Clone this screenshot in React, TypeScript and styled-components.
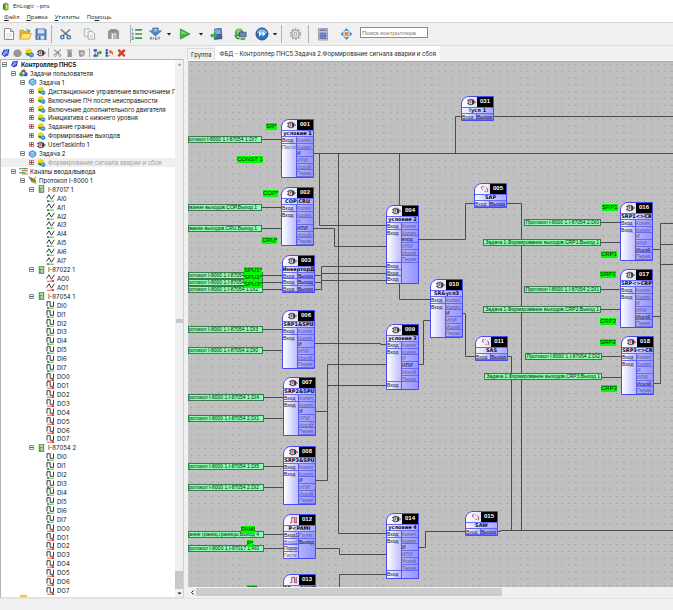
import React from "react";
import styled, { createGlobalStyle } from "styled-components";

const GlobalStyle = createGlobalStyle`
  * { box-sizing: border-box; }
  html, body { margin: 0; height: 100%; }
  #root { height: 100%; }
  body { overflow: hidden; background: #f0f0f0; }
  button { margin: 0; padding: 0; border: 0; background: none; color: inherit; font: inherit; }
`;

const arial = `"Liberation Sans", Arial, sans-serif`;
const inter = `Inter, "Liberation Sans", sans-serif`;
const segoe = `"Open Sans", "Noto Sans", sans-serif`;
const tahoma = `"DejaVu Sans", Verdana, sans-serif`;

const Window = styled.div`
  display: flex; flex-direction: column; height: 100vh; min-height: 300px;
  background: #f0f0f0; color: #1c1c1c; font: 6px/9px ${inter};
`;
const TitleBar = styled.header`
  display: flex; align-items: center; gap: 4px; height: 12px; padding-left: 2px;
  background: #fff;
`;
const AppTitle = styled.h1`margin: 0; font: 6px/10px ${segoe};`;
const MenuBar = styled.nav`
  display: flex; align-items: center; gap: 7px; height: 10px; padding-left: 4px;
  background: #fff; font: 6px/10px ${segoe};
  u { text-decoration-thickness: 1px; text-underline-offset: 1px; }
`;
const MainToolbar = styled.div`
  display: flex; align-items: center; height: 24px; padding-left: 3px;
  background: #f0f0f0; border-top: 1px solid #d5d5d5; border-bottom: 1px solid #dcdcdc;
`;
const Tool = styled.button<{ $gap?: number; $size?: number }>`
  display: grid; place-items: center; flex: none;
  width: ${p => p.$size ?? 12}px; height: 14px; margin-left: ${p => p.$gap ?? 0}px;
  svg { display: block; width: 100%; height: 100%; }
`;
const Divider = styled.span<{ $gap: number; $h?: number }>`
  flex: none; width: 1px; height: ${p => p.$h ?? 18}px; margin-left: ${p => p.$gap}px; background: #b0b0b0;
`;
const Search = styled.input`
  width: 68px; height: 11px; margin: 0 0 3px 7px; padding: 0 1px; border: 1px solid #8a8a8a;
  background: #fff; font: 6px/9px ${arial}; outline: none; border-radius: 0;
  &::placeholder { color: #777; opacity: 1; }
`;
const Workspace = styled.main`display: flex; flex: 1; min-height: 0;`;
const Sidebar = styled.aside`display: flex; flex-direction: column; flex: none; width: 184px;`;
const TreeToolbar = styled.div`display: flex; align-items: center; height: 13px; padding-left: 1px;`;
const TreePane = styled.div`
  display: flex; flex: 1; min-height: 0; overflow: hidden;
  background: #fff; border: 1px solid #b4b4b4; border-bottom-color: #e0e0e0; border-right-color: #d0d0d0;
`;
const Tree = styled.ul`
  display: grid; grid-template-rows: repeat(60, minmax(8px, 1fr)) 2px; flex: 1; min-width: 0;
  margin: 0; padding: 0; list-style: none; overflow: hidden;
`;
const TreeRow = styled.li<{ $level: number; $root?: boolean; $muted?: boolean }>`
  display: flex; align-items: center; min-height: 0; overflow: hidden; white-space: nowrap;
  padding-left: ${p => 1 + p.$level * 9}px;
  background: ${p => (p.$muted ? "#efefef" : "none")};
  color: ${p => (p.$muted ? "#a0a0a0" : "#111")};
  font-weight: ${p => (p.$root ? "bold" : "normal")};
`;
const Expander = styled.button<{ $leaf?: boolean }>`
  flex: none; width: 5px; height: 5px; margin-right: 3px; visibility: ${p => (p.$leaf ? "hidden" : "visible")};
  svg { display: block; width: 5px; height: 5px; }
`;
const RowIcon = styled.span`
  flex: none; width: 9px; height: 8px; margin-right: 2px;
  svg { display: block; width: 9px; height: 8px; }
`;
const VScroll = styled.div`
  display: flex; flex-direction: column; flex: none; width: 8px; background: #f0f0f0;
`;
const ScrollButton = styled.button`
  flex: none; display: grid; place-items: center; width: 8px; height: 8px; background: #f2f2f2;
  svg { display: block; width: 5px; height: 5px; }
`;
const Spacer = styled.div<{ $grow: number }>`flex: ${p => p.$grow} 1 0;`;
const Grip = styled.div`flex: none; height: 4px; margin-left: 1px; background: #c6c6c6;`;
const VThumb = styled.div`flex: none; height: 18px; background: #c8c8c8;`;

const Editor = styled.section`display: flex; flex-direction: column; flex: 1; min-width: 0; padding-left: 3px;`;
const Tabs = styled.div`display: flex; align-items: flex-end; height: 15px; border-bottom: 1px solid #fafafa;`;
const Tab = styled.button<{ $active?: boolean }>`
  height: ${p => (p.$active ? 14 : 12)}px; padding: 0 3px; white-space: nowrap;
  background: ${p => (p.$active ? "#fff" : "#f2f2f2")}; border: 1px solid ${p => (p.$active ? "#fff" : "#dcdcdc")};
  border-bottom: 0; line-height: 11px;
`;
const Canvas = styled.div`
  position: relative; flex: 1; min-height: 0; overflow: hidden; margin-left: 1px;
  background: #c0c0c0; border-top: 1px solid #a8a8a8;
`;
const Wires = styled.svg`position: absolute; inset: 0; width: 100%; height: 100%;`;
const HScroll = styled.div`
  display: flex; flex: none; height: 9px; margin: 1px 0 1px 1px; background: #f0f0f0;
`;
const HThumb = styled.div`width: 63%; height: 8px; background: #cdcdcd;`;
const Status = styled.footer`height: 12px; background: #f0f0f0; border-top: 1px solid #e4e4e4;`;

const NodeBox = styled.article<{ $x: number; $y: number; $h: number }>`
  position: absolute; left: ${p => p.$x}px; top: ${p => p.$y}px; width: 33px; height: ${p => p.$h}px;
  display: grid; grid-template-rows: 10px 7px 1fr; overflow: hidden;
  border: 1px solid #4a4af0; border-radius: 8px 0 0 0; background: #a6a6ff; color: #08081c;
`;
const NodeHead = styled.div`
  display: flex; justify-content: flex-end; align-items: center; gap: 1px;
  background: linear-gradient(90deg, #fff, #c4c4ff);
  svg { width: 9px; height: 8px; }
`;
const NodeNumber = styled.b`
  width: 16px; height: 10px; background: #000; color: #fff; text-align: center; font: bold 6px/9px ${arial};
`;
const NodeTitle = styled.h2`
  margin: 0; overflow: hidden; white-space: nowrap; border-top: 1px solid #6a6af4; border-bottom: 1px solid #6a6af4;
  display: flex; justify-content: center; background: linear-gradient(90deg, #f4f4ff, #a8a8ff);
  font: bold 5px/5px ${tahoma};
`;
const Pins = styled.div`display: grid; grid-template-columns: 14fr 17fr; min-height: 0;`;
const PinColumn = styled.div<{ $out?: boolean; $n: number }>`
  display: grid; grid-template-rows: repeat(${p => p.$n}, minmax(0, 1fr)); min-height: 0; min-width: 0;
  border-left: ${p => (p.$out ? "1px solid #5a5af2" : "0")};
  background: ${p => (p.$out ? "linear-gradient(90deg, #b4b4ff, #9494ff)" : "linear-gradient(90deg, #fff, #bcbcff)")};
`;
const Pin = styled.span<{ $dim?: boolean; $line?: boolean }>`
  overflow: hidden; white-space: nowrap; min-height: 0;
  color: ${p => (p.$dim ? "#54548c" : "#08081c")};
  border-bottom: ${p => (p.$line ? "1px solid #6868f6" : "0")};
  font: 5px/6px ${arial};
`;
const Mark = styled.span<{ $x: number; $y: number }>`
  position: absolute; left: ${p => p.$x}px; top: ${p => p.$y}px; height: 7px;
  background: #00fc00; color: #001c00; white-space: nowrap; font: 6px/7px ${arial};
`;
const Source = styled.span<{ $x: number; $y: number; $w: number }>`
  position: absolute; left: ${p => p.$x}px; top: ${p => p.$y}px; width: ${p => p.$w}px; height: 7px;
  display: flex; justify-content: flex-end; overflow: hidden; white-space: nowrap; padding-right: ${p => (p.$x ? 1 : 4)}px;
  background: #8dfcae; border: 1px solid #3b7a50; color: #0a2412; font: 5px/5px ${arial};
`;

/* ---------- icons ---------- */
const Doc = () => (
  <svg viewBox="0 0 12 14"><path d="M1.5 1.5h6l3 3v8h-9z" fill="#fff" stroke="#8d8d8d" /><path d="M7.5 1.5v3h3" fill="#ddd" stroke="#8d8d8d" /><path d="M3 7h6M3 9h6M3 11h4" stroke="#cfd6dc" /></svg>
);
const OpenFolder = () => (
  <svg viewBox="0 0 14 14"><path d="M1 12V3h4l1 1.500h5V12z" fill="#e3b530" stroke="#b98a1a" strokeWidth=".7" /><path d="M1 12.500 3.500 6.500H13.500L11 12.500z" fill="#ffe27a" stroke="#c4982a" strokeWidth=".7" /><path d="M7 3.500c1-2 3-2 4-.5l1-.5-.3 2.600-2.300-.8.800-.5c-.7-1-2-1-3.200-.3z" fill="#57a83a" /></svg>
);
const Floppy = () => (
  <svg viewBox="0 0 13 14"><path d="M1 1.500h10l1 1V13H1z" fill="#5f88c4" stroke="#3c629c" strokeWidth=".8" /><path d="M3 2h7v4.500H3z" fill="#cfe0f5" /><path d="M3 9h7v4H3z" fill="#dfe4ea" /><path d="M4 9.500h2V13H4z" fill="#3f5f90" /></svg>
);
const Scissors = ({ gray }: { gray?: boolean }) => (
  <svg viewBox="0 0 14 14"><path d="m2 2 8 7M12 2 4 9" stroke={gray ? "#8f8f8f" : "#7c8794"} strokeWidth="1.700" /><path d="m7 6 2 2" stroke="#444" /><circle cx="3.500" cy="10.500" r="1.800" fill="none" stroke={gray ? "#999" : "#3878b8"} strokeWidth="1.500" /><circle cx="10.500" cy="10.500" r="1.800" fill="none" stroke={gray ? "#999" : "#3878b8"} strokeWidth="1.500" /></svg>
);
const Copy = () => (
  <svg viewBox="0 0 14 14"><path d="M1.500 1.500h5l2 2v6h-7z" fill="#f4f4f4" stroke="#a9adb2" /><path d="M5.500 4.500h5l2 2v6h-7z" fill="#fafafa" stroke="#a0a5aa" /><path d="M7 8h4M7 10h4" stroke="#ccc" /></svg>
);
const Paste = () => (
  <svg viewBox="0 0 14 14"><path d="M1 12.500V4l3-2.500h6L13 4v8.500h-3V6.500H5v6z" fill="#989898" /><path d="M6.500 7.500h3v5h-3z" fill="#b4b4b4" /><path d="M4 4h6" stroke="#7c7c7c" /></svg>
);
const NumberList = () => (
  <svg viewBox="0 0 13 14"><path d="M4.500 2.500H12M4.500 7H12M4.500 11.500H12" stroke="#3a9a3a" strokeWidth="1.700" /><path d="M1.500 1v3M.5 6h2L1 8h1.500M.5 10h2v3h-2M1 11.500h1" fill="none" stroke="#4b6a8a" strokeWidth=".8" /></svg>
);
const Load = () => (
  <svg viewBox="0 0 14 14"><path d="M4 .5h6v3h3.500L7 9.500.5 3.500H4z" fill="#5288c8" stroke="#3567a0" strokeWidth=".6" /><path d="M5 1.500h4v3H5z" fill="#8fb5e2" /><path d="M1.500 13v-2.500h1.500V13M5 10.500V13M7 10.500V13h1.500v-2.500M10 10.500h2M11 10.500V13" fill="none" stroke="#4a78c8" strokeWidth=".9" /></svg>
);
const Play = () => (
  <svg viewBox="0 0 13 14"><path d="M1.500 1.500 12 7 1.500 12.500z" fill="#3fb53f" stroke="#2a8f2a" strokeWidth=".8" /><path d="M2.500 3.500 9 7H2.500z" fill="#7fd67a" /></svg>
);
const Caret = () => <svg viewBox="0 0 6 6"><path d="M.8 2h4.400L3 4.500z" fill="#222" /></svg>;
const Disk = () => (
  <svg viewBox="0 0 14 14"><path d="M5 1.500 12 1l1 11-8 1z" fill="#4d5aa5" stroke="#333c78" strokeWidth=".6" /><path d="M5 2h6.500v5H5z" fill="#6cb8e0" /><path d="M1 7.500h3.500V5l4 3.800-4 3.800V10H1z" fill="#3fae4f" stroke="#27803a" strokeWidth=".5" /></svg>
);
const GlobePc = () => (
  <svg viewBox="0 0 14 14"><circle cx="5.500" cy="5.500" r="4.500" fill="#3f9a45" /><path d="M2 4c2-3 5-3 6-1L6 5 4 8z" fill="#8bd06a" /><path d="M6 5h7v5H6z" fill="#5d8cc0" stroke="#444b60" strokeWidth=".8" /><path d="M7 11h5v2.500H7z" fill="#6f9a70" /><path d="M1 8c1 3 2 4 5 4" stroke="#2f7a36" fill="none" strokeWidth="1.500" /></svg>
);
const Forward = () => (
  <svg viewBox="0 0 14 14"><circle cx="7" cy="7" r="6" fill="#1f78cc" stroke="#3c4858" strokeWidth="1" /><path d="M2 6c1-5 9-5 10 0-3 1.500-7 1.500-10 0" fill="#7cc0f2" /><path d="m4 4.500 3 2.500-3 2.500zM7.500 4.500l3 2.500-3 2.500z" fill="#fff" /></svg>
);
const Gear = () => (
  <svg viewBox="0 0 14 14"><circle cx="7" cy="7" r="5.300" fill="none" stroke="#a0a0a0" strokeWidth="1.800" strokeDasharray="2 1.330" /><circle cx="7" cy="7" r="4" fill="#ededed" stroke="#979797" strokeWidth="1" /><circle cx="7" cy="7" r="1.600" fill="#f8f8f8" stroke="#979797" /></svg>
);
const Calc = () => (
  <svg viewBox="0 0 10 13"><path d="M.5 1h9v11.500h-9z" fill="#d2d6e6" stroke="#8a8f9a" strokeWidth=".8" /><path d="M1.500 2h7v1.700h-7z" fill="#6b7296" /><path d="M1.500 5h7v6.500h-7z" fill="#6a72bd" /><path d="M2 7h6M2 9.500h6" stroke="#9aa0da" strokeWidth=".6" /></svg>
);
const Move = () => (
  <svg viewBox="0 0 14 14"><path d="m7 .5 2.700 3.200H4.300zM7 13.500l2.700-3.200H4.300zM.5 7l3.200-2.700v5.400zM13.500 7l-3.200-2.700v5.400z" fill="#4395c4" /><path d="M3.500 3.500h2v2h-2zM8.500 3.500h2v2h-2zM3.500 8.500h2v2h-2zM8.500 8.500h2v2h-2z" fill="#a9c8da" /><path d="M5 5h4v4H5z" fill="#f08030" /></svg>
);
const Cube = () => (
  <svg viewBox="0 0 10 10"><path d="M3 1.500 9.500.8 8 7.500 4 9.500.5 6.500z" fill="#2b3fd0" /><path d="M3.500 2.500 8 2 7 6 3 7z" fill="#7f96f4" /><path d="m1.500 6 2-.5.800 2.500z" fill="#dfe6ff" /></svg>
);
const Hex = () => <svg viewBox="0 0 10 10"><path d="M3 1h4l2.500 3v3L7 9.500H3L.5 7V4z" fill="#969696" /></svg>;
const Ball = () => (
  <svg viewBox="0 0 10 10"><circle cx="4.200" cy="4" r="3.800" fill="#f2d21a" /><path d="M.6 5.500C3 4 5 5 6 8 3.500 8.800 1.200 7.500.6 5.500" fill="#2f9c3c" /><circle cx="7.200" cy="7.200" r="2.700" fill="#2f8be0" /><path d="M5.500 6.800h3" stroke="#bfe2ff" strokeWidth=".8" /></svg>
);
const Plug = () => (
  <svg viewBox="0 0 10 9"><path d="M2 1.500h4v6H2z" fill="#e9e9ee" stroke="#3c3c44" strokeWidth="1" /><path d="M0 3h2M0 6h2M7 4.500h3" stroke="#333" strokeWidth="1" /><path d="M4 3v3M3 3h2" stroke="#c03038" strokeWidth=".9" /><path d="M6 2h2v5H6" fill="#333" /></svg>
);
const GraySlab = () => <svg viewBox="0 0 10 10"><path d="M2 1h6v1.500H2zM3 3h4.500v6.500H3z" fill="#909090" /></svg>;
const GrayTrash = () => <svg viewBox="0 0 10 10"><path d="M1.500 2h7v5l-3 2.500-3-1z" fill="#989898" /><path d="M4 4h3v3H4z" fill="#ccc" /></svg>;
const MoveUp = () => <svg viewBox="0 0 10 10"><path d="M1 1h3v2H1zM1 7h3v2H1zM2.500 3v4" fill="#2a55b0" stroke="#2a55b0" strokeWidth=".6" /><path d="M4.500 3.500h3V1.500L10 4.500 7.500 7V5.500H6V9H4.500z" fill="#35963d" /></svg>;
const MoveDown = () => <svg viewBox="0 0 10 10"><path d="M1 1h2v2H1zM1 4h2v2H1zM1 7h2v2H1zM4 8h2" fill="#2a55b0" stroke="#2a55b0" strokeWidth=".6" /><path d="M4 3.500 6.500 1v1.500C9 2.500 9.500 5 8.500 8 8 6 7.500 5 6.500 5v1.300z" fill="#d8762a" /></svg>;
const Remove = () => <svg viewBox="0 0 10 10"><path d="m1.500 1.500 7 7M8.500 1.500l-7 7" stroke="#d5331f" strokeWidth="2.700" /><path d="m2 2 6 6" stroke="#f08a60" strokeWidth=".7" /></svg>;
const Tasks = () => <svg viewBox="0 0 10 9"><circle cx="5" cy="3" r="2.500" fill="#e23a2a" /><circle cx="2.800" cy="6" r="2.500" fill="#3aa346" /><circle cx="7.200" cy="6" r="2.500" fill="#2d62d6" /><circle cx="5" cy="4.800" r="1.300" fill="#e8f0ff" /></svg>;
const Clock = () => <svg viewBox="0 0 10 10"><path d="M5 .5 9.300 3v4L5 9.500.7 7V3z" fill="#4f9be6" stroke="#2c6fc0" strokeWidth=".6" /><circle cx="5" cy="5" r="2.800" fill="#a9d3fa" /><path d="M3 4.500 5 6l2-2.500" fill="none" stroke="#2c6fc0" strokeWidth=".8" /></svg>;
const Channels = () => <svg viewBox="0 0 10 9"><path d="M0 2h7M0 6.500h7" stroke="#349a42" strokeWidth="1.200" /><path d="M3 4.300h7M6 2h4" stroke="#d0352b" strokeWidth="1" /><path d="M3 7.800h7" stroke="#444" strokeWidth=".8" /></svg>;
const Protocol = () => <svg viewBox="0 0 10 9"><path d="M0 0 6 3 4 6z" fill="#d43a2a" /><path d="M2 2.500 8 3.500 9.500 8.800 4 7z" fill="#3d9a45" /><path d="M6.500 3.500 9 .8M5 5.500 8 8" stroke="#e0a020" strokeWidth="1.500" /></svg>;
const Module = () => <svg viewBox="0 0 10 10"><path d="M2 .5h6v9H2z" fill="#4fa55a" stroke="#357845" strokeWidth=".7" /><path d="M3 1.500h4v2H3z" fill="#d4e89a" /><path d="M4 5h2v3H4z" fill="#e8d64a" /><path d="M6.500 4v5" stroke="#bfe4cc" /></svg>;
const Folder = () => <svg viewBox="0 0 10 9"><path d="M1 8V2h3l1-1h4v7z" fill="#f0c63a" /></svg>;
const Signal = ({ digital, out }: { digital?: boolean; out?: boolean }) => (
  <svg viewBox="0 0 9 8">
    <path d={digital ? "M1 5.500V.7h3.200v4.600h3.300V.7" : "M.5 4.500 3 .8l2.500 4.400L8.300.8"} fill="none" stroke="#3a3a3a" strokeWidth="1" />
    <path d="M1 7.200h7" stroke={out ? "#f03a30" : "#4fae56"} strokeWidth=".9" />
    <circle cx={out ? 7 : 2} cy="7" r="1" fill={out ? "#e01818" : "#2a8e35"} />
  </svg>
);
const Box = ({ open }: { open?: boolean }) => (
  <svg viewBox="0 0 5 5"><path d="M.5.5h4v4h-4z" fill="#fff" stroke="#8a8a8a" />{open ? <path d="M1 2.500h3" stroke="#3d6b6b" /> : <path d="M1 2.500h3M2.500 1v3" stroke="#d03030" />}</svg>
);
const Threshold = () => <svg viewBox="0 0 10 9"><path d="M1 7.500h2V1.500h3v6h3" fill="none" stroke="#b03040" strokeWidth="1" /><path d="M8 1v6" stroke="#6a3050" strokeWidth="1" /></svg>;
const Coil = () => <svg viewBox="0 0 10 9"><path d="M3 1C1 3 1 4 3 5M7 3c2 2 2 4 1 5" fill="none" stroke="#c03040" strokeWidth="1" /><path d="M4 2h1M5 7h2" stroke="#555" strokeWidth=".9" /></svg>;
const Logo = () => <svg width="7" height="9" viewBox="0 0 7 9"><path d="M1 2 4 .5 6.500 2v5.500L3.500 8.800.8 7z" fill="#5aa03c" /><path d="M3.500 2.500h2v4.500h-2z" fill="#e3e26a" /><path d="M1.500 2.500h1V7h-1z" fill="#2f6e2a" /></svg>;

/* ---------- project tree ---------- */
type Item = { level: number; label: string; icon: React.ReactNode; open?: boolean; leaf?: boolean; muted?: boolean };
const signals = (kind: string, count: number): Item[] =>
  Array.from({ length: count }, (_, i) => ({
    level: 4, label: kind + i, leaf: true, icon: <Signal digital={kind[0] === "D"} out={kind[1] === "O"} />,
  }));
const block = (label: string, muted?: boolean): Item => ({ level: 3, label, icon: <Ball />, muted });
const moduleItem = (label: string): Item => ({ level: 3, label, icon: <Module />, open: true });

const items: Item[] = [
  { level: 0, label: "Контроллер ПНС5", icon: <Cube />, open: true },
  { level: 1, label: "Задачи пользователя", icon: <Tasks />, open: true },
  { level: 2, label: "Задача 1", icon: <Clock />, open: true },
  block("Дистанционное управление включением П"),
  block("Включение ПЧ после неисправности"),
  block("Включение дополнительного двигателя"),
  block("Инициатива с нижнего уровня"),
  block("Задание границ"),
  block("Формирование выходов"),
  { level: 3, label: "UserTaskInfo 1", icon: <Plug /> },
  { level: 2, label: "Задача 2", icon: <Clock />, open: true },
  block("Формирование сигнала аварии и сбоя", true),
  { level: 1, label: "Каналы ввода/вывода", icon: <Channels />, open: true },
  { level: 2, label: "Протокол I-8000 1", icon: <Protocol />, open: true },
  moduleItem("I-87017 1"), ...signals("AI", 8),
  moduleItem("I-87022 1"), ...signals("AO", 2),
  moduleItem("I-87054 1"), ...signals("DI", 8), ...signals("DO", 8),
  moduleItem("I-87054 2"), ...signals("DI", 8), ...signals("DO", 8),
  { level: 1, label: "", icon: <Folder />, leaf: true },
];

/* ---------- diagram ---------- */
type PinDef = { text: string; dim?: boolean; line?: boolean };
type NodeDef = { id: string; x: number; y: number; h: number; title: string; icon: React.ReactNode; left: PinDef[]; right: PinDef[] };
const pin = (text: string, dim?: boolean, line?: boolean): PinDef => ({ text, dim, line });

const logic = (id: string, x: number, y: number, title: string, active: number, extra = 0, second = "Вход", names?: string[]): NodeDef => {
  const labels = names ?? ["Колич", "Колич", "И", "ИЛИ", "Исклй", "Перех"];
  return {
    id, x, y, title, h: [59, 66, 73, 79][extra], icon: <Plug />,
    left: [pin("Вход", false, true), pin(second, second !== "Вход"), pin(""), pin(""), pin(""), pin("", false, extra > 0),
      ...Array.from({ length: extra }, (_, i) => pin("Вход", false, i < extra - 1))],
    right: [...labels.map((t, i) => pin(t, i !== active, true)), ...Array.from({ length: extra }, () => pin(""))],
  };
};
const simple = (id: string, x: number, y: number, title: string, icon: React.ReactNode, rows = 1): NodeDef => ({
  id, x, y, title, icon, h: rows === 1 ? 25 : 38,
  left: Array.from({ length: rows }, () => pin("Вход", false, true)),
  right: Array.from({ length: rows }, () => pin("Выход", false, true)),
});
const limit = (id: string, x: number, y: number, title: string): NodeDef => ({
  id, x, y, title, h: 45, icon: <Threshold />,
  left: [pin("Вход1", false, true), pin("Вход2", true, true), pin("Порог", false, true), pin("Гисте", true)],
  right: [pin("Групп", true, true), pin("Выход"), pin(""), pin("")],
});

const nodes: NodeDef[] = [
  logic("001", 93, 57, "условие 1", 2, 0, "Посто"),
  logic("002", 93, 125, "COP|CRU", 3),
  simple("003", 94, 193, "ИнверторД", <Plug />, 3),
  logic("006", 94, 248, "SRP1&SPU", 2),
  logic("007", 95, 315, "SRP2&SPU", 2),
  logic("008", 95, 384, "SRP3&SPU", 2),
  limit("012", 95, 452, "P<PAMI"),
  limit("013", 95, 512, "SP<>CONS"),
  logic("004", 198, 143, "условие 2", 2, 3, "Вход", ["Колич", "Колич", "вход", "ИЛИ", "Исклй", "Перех"]),
  simple("005", 286, 121, "SAP", <Coil />),
  logic("009", 198, 262, "условие 3", 3, 1),
  logic("010", 242, 217, "SR&усл3", 2),
  simple("011", 287, 274, "SAS", <Coil />),
  logic("014", 198, 451, "условие 4", 2, 1),
  simple("015", 277, 449, "SAW", <Coil />),
  simple("031", 273, 34, "!усл 1", <Plug />),
  logic("016", 432, 140, "SRP1<>CR", 4),
  logic("017", 432, 207, "SRP<>CRP", 4),
  logic("018", 433, 274, "SRP3<>CR", 4),
];

const marks: [number, number, string][] = [
  [78, 61, "SR*"], [49, 94, "CONST 1"], [75, 128, "COP*"], [74, 175, "CRU*"],
  [56, 205, "SPU1*"], [56, 212, "SPU2*"], [56, 219, "SPU3*"],
  [53, 464, "PAMI"], [59, 478, "P*"], [59, 523, "SP*"],
  [414, 142, "SRP1"], [413, 189, "CRP1"], [412, 209, "SRP2"], [412, 256, "CRP2"], [412, 277, "SRP3"], [413, 323, "CRP3"],
];

const sources: [number, number, number, string][] = [
  [0, 74, 74, "Протокол I-8000 1.I-87054 1.DI7"],
  [0, 142, 74, "Формирование выходов.COP.Выход 1"],
  [0, 163, 74, "Формирование выходов.CRU.Выход 1"],
  [0, 210, 75, "Протокол I-8000 1.I-87054 1.DI0"],
  [0, 217, 75, "Протокол I-8000 1.I-87054 1.DI1"],
  [0, 224, 75, "Протокол I-8000 1.I-87054 1.DI2"],
  [0, 264, 75, "Протокол I-8000 1.I-87054 1.DI3"],
  [0, 285, 75, "Протокол I-8000 1.I-87054 2.DI0"],
  [0, 332, 76, "Протокол I-8000 1.I-87054 1.DI4"],
  [0, 353, 76, "Протокол I-8000 1.I-87054 2.DI1"],
  [0, 401, 76, "Протокол I-8000 1.I-87054 1.DI5"],
  [0, 422, 76, "Протокол I-8000 1.I-87054 2.DI2"],
  [0, 469, 76, "Задание границ.границы.Выход 4"],
  [0, 483, 76, "Протокол I-8000 1.I-87017 1.AI0"],
  [336, 157, 77, "Протокол I-8000 1.I-87054 2.DI0"],
  [295, 177, 118, "Задача 1.Формирование выходов.CRP1.Выход 1"],
  [336, 224, 77, "Протокол I-8000 1.I-87054 2.DI1"],
  [295, 244, 118, "Задача 1.Формирование выходов.CRP2.Выход 1"],
  [337, 291, 77, "Протокол I-8000 1.I-87054 2.DI2"],
  [296, 311, 118, "Задача 1.Формирование выходов.CRP3.Выход 1"],
];

const wires = [
  "M74 77.500H93", "M74 145.500H93", "M74 166.500H93", "M75 213.500H94M75 220.500H94M75 227.500H94",
  "M75 267.500H94M75 288.500H94", "M76 335.500H95M76 356.500H95", "M76 404.500H95M76 425.500H95", "M76 472.500H95M76 486.500H95",
  "M126 91.500H2000", "M131.500 91.500V163.500H198", "M150.500 91.500V471.500H198",
  "M126 166.500H146.500V184.500H198",
  "M127 213.500H133.500M127 220.500H133.500M127 227.500H133.500M133.500 204.500V227.500M133.500 204.500H198M133.500 211.500H198M133.500 218.500H198",
  "M127 281.500H192.500V282.500H198",
  "M128 349.500H139.500M139.500 418.500V302.500H198M139.500 323.500H198M128 418.500H139.500",
  "M128 486.500H151.500V492.500H198", "M151.500 540V512.500H198",
  "M231 177.500H277.500V141.500H286", "M267.500 91.500V54.500H273", "M306 54.500H2000",
  "M211.500 91.500V143M211.500 222V237.500H242",
  "M231 302.500H235.500V258.500H242", "M275 251.500H277.500V294.500H287",
  "M319 141.500H333.500V468.500", "M320 294.500H323.500V468.500",
  "M231 485.500H237.500V469.500H277", "M310 469.500H312.500V468.500H2000",
  "M413 160.500H432M413 180.500H432M413 227.500H432M413 247.500H432M414 294.500H433M414 315.500H433",
  "M465 187.500H472.500M465 254.500H472.500M466 321.500H472.500M472.500 321.500V161.500",
  "M472.500 161.500H2000M472.500 182.500H2000M472.500 202.500H2000",
];

const NodeView = ({ node }: { node: NodeDef }) => (
  <NodeBox $x={node.x} $y={node.y} $h={node.h}>
    <NodeHead>{node.icon}<NodeNumber>{node.id}</NodeNumber></NodeHead>
    <NodeTitle>{node.title}</NodeTitle>
    <Pins>
      <PinColumn $n={node.left.length}>
        {node.left.map((p, i) => <Pin key={i} $dim={p.dim} $line={p.line}>{p.text}</Pin>)}
      </PinColumn>
      <PinColumn $out $n={node.right.length}>
        {node.right.map((p, i) => <Pin key={i} $dim={p.dim} $line={p.line}>{p.text}</Pin>)}
      </PinColumn>
    </Pins>
  </NodeBox>
);

export default function App() {
  return (
    <Window>
      <GlobalStyle />
      <TitleBar><Logo /><AppTitle>EnLogic - pns</AppTitle></TitleBar>
      <MenuBar aria-label="Меню">
        <button><u>Ф</u>айл</button><button><u>П</u>равка</button><button><u>У</u>тилиты</button><button>По<u>м</u>ощь</button>
      </MenuBar>
      <MainToolbar role="toolbar">
        <Tool aria-label="Создать"><Doc /></Tool>
        <Tool aria-label="Открыть" $gap={4} $size={13}><OpenFolder /></Tool>
        <Tool aria-label="Сохранить" $gap={3}><Floppy /></Tool>
        <Divider $gap={4} />
        <Tool aria-label="Вырезать" $gap={7} $size={13}><Scissors /></Tool>
        <Tool aria-label="Копировать" $gap={11} $size={13}><Copy /></Tool>
        <Tool aria-label="Вставить" $gap={11} $size={13}><Paste /></Tool>
        <Divider $gap={10} />
        <Tool aria-label="Список"><NumberList /></Tool>
        <Tool aria-label="Загрузить" $gap={6} $size={13}><Load /></Tool>
        <Tool aria-label="Варианты загрузки" $gap={4} $size={6}><Caret /></Tool>
        <Tool aria-label="Пуск" $gap={7}><Play /></Tool>
        <Tool aria-label="Варианты пуска" $gap={7} $size={6}><Caret /></Tool>
        <Tool aria-label="Записать" $gap={6} $size={13}><Disk /></Tool>
        <Tool aria-label="Сеть" $gap={11} $size={13}><GlobePc /></Tool>
        <Tool aria-label="Вперёд" $gap={8} $size={14}><Forward /></Tool>
        <Tool aria-label="Варианты перехода" $gap={3} $size={6}><Caret /></Tool>
        <Divider $gap={3} />
        <Tool aria-label="Настройки" $gap={7} $size={13}><Gear /></Tool>
        <Divider $gap={6} />
        <Tool aria-label="Таблица" $gap={9} $size={10}><Calc /></Tool>
        <Tool aria-label="Центрировать" $gap={12} $size={13}><Move /></Tool>
        <Search aria-label="Поиск контроллера" placeholder="Поиск контроллера" />
      </MainToolbar>
      <Workspace>
        <Sidebar>
          <TreeToolbar role="toolbar">
            <Tool aria-label="Контроллер" $size={9}><Cube /></Tool>
            <Tool aria-label="Задача" $gap={3} $size={9}><Hex /></Tool>
            <Tool aria-label="Блок" $gap={3} $size={9}><Ball /></Tool>
            <Tool aria-label="Вход" $gap={3} $size={9}><Plug /></Tool>
            <Divider $gap={2} $h={9} />
            <Tool aria-label="Вырезать узел" $gap={4} $size={9}><Scissors gray /></Tool>
            <Tool aria-label="Вставить узел" $gap={3} $size={9}><GraySlab /></Tool>
            <Tool aria-label="Корзина" $gap={3} $size={9}><GrayTrash /></Tool>
            <Divider $gap={3} $h={9} />
            <Tool aria-label="Вверх" $gap={3} $size={9}><MoveUp /></Tool>
            <Tool aria-label="Вниз" $gap={3} $size={9}><MoveDown /></Tool>
            <Tool aria-label="Удалить" $gap={3} $size={9}><Remove /></Tool>
          </TreeToolbar>
          <TreePane>
            <Tree>
              {items.map((it, i) => (
                <TreeRow key={i} $level={it.level} $root={it.level === 0} $muted={it.muted}>
                  <Expander $leaf={it.leaf} aria-label={it.open ? "Свернуть" : "Развернуть"}><Box open={it.open} /></Expander>
                  <RowIcon>{it.icon}</RowIcon>
                  {it.label}
                </TreeRow>
              ))}
            </Tree>
            <VScroll>
              <ScrollButton aria-label="Прокрутить вверх"><svg viewBox="0 0 5 5"><path d="M.5 3.500 2.500 1.500l2 2z" fill="#888" /></svg></ScrollButton>
              <Spacer $grow={251} /><Grip /><Spacer $grow={248} /><VThumb />
              <ScrollButton aria-label="Прокрутить вниз"><svg viewBox="0 0 5 5"><path d="M.5 1.500 2.500 3.500l2-2z" fill="#111" /></svg></ScrollButton>
            </VScroll>
          </TreePane>
        </Sidebar>
        <Editor>
          <Tabs role="tablist">
            <Tab role="tab" aria-selected={false}>Группа</Tab>
            <Tab role="tab" aria-selected $active>ФБД - Контроллер ПНС5.Задача 2.Формирование сигнала аварии и сбоя</Tab>
          </Tabs>
          <Canvas>
            <Wires aria-hidden="true">
              <defs>
                <pattern id="dots" width="6.860" height="6.860" x="3.200" y="1.800" patternUnits="userSpaceOnUse">
                  <rect width="1" height="1" fill="#8c8c8c" />
                </pattern>
              </defs>
              <rect width="100%" height="100%" fill="url(#dots)" />
              <path d={wires.join("")} fill="none" stroke="#4c4c4c" />
            </Wires>
            {sources.map(([x, y, w, text], i) => <Source key={i} $x={x} $y={y} $w={w}>{text}</Source>)}
            {nodes.map(n => <NodeView key={n.id} node={n} />)}
            {marks.map(([x, y, text]) => <Mark key={text} $x={x} $y={y}>{text}</Mark>)}
          </Canvas>
          <HScroll>
            <ScrollButton aria-label="Прокрутить влево"><svg viewBox="0 0 5 5"><path d="M3.500.5 1.500 2.500l2 2" fill="none" stroke="#222" /></svg></ScrollButton>
            <HThumb />
          </HScroll>
        </Editor>
      </Workspace>
      <Status />
    </Window>
  );
}
